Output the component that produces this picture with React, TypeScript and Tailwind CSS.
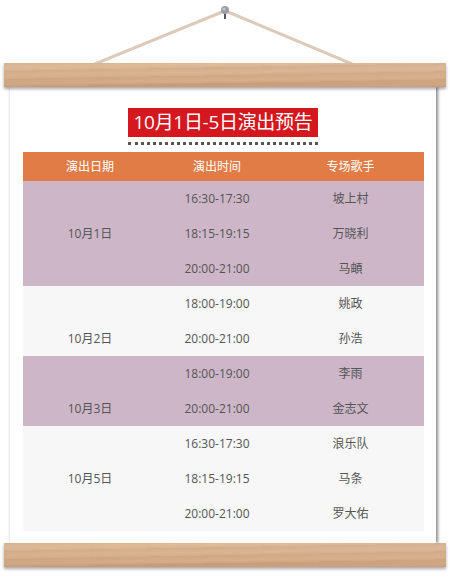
import React from 'react';

type Show = { time: string; singer: string };
type Group = { date: string; shows: Show[]; bg: string };

const GROUPS: Group[] = [
  {
    date: '10月1日',
    bg: 'bg-[#cdb6c8]',
    shows: [
      { time: '16:30-17:30', singer: '坡上村' },
      { time: '18:15-19:15', singer: '万晓利' },
      { time: '20:00-21:00', singer: '马頔' },
    ],
  },
  {
    date: '10月2日',
    bg: 'bg-[#f7f7f7]',
    shows: [
      { time: '18:00-19:00', singer: '姚政' },
      { time: '20:00-21:00', singer: '孙浩' },
    ],
  },
  {
    date: '10月3日',
    bg: 'bg-[#cdb6c8]',
    shows: [
      { time: '18:00-19:00', singer: '李雨' },
      { time: '20:00-21:00', singer: '金志文' },
    ],
  },
  {
    date: '10月5日',
    bg: 'bg-[#f7f7f7]',
    shows: [
      { time: '16:30-17:30', singer: '浪乐队' },
      { time: '18:15-19:15', singer: '马条' },
      { time: '20:00-21:00', singer: '罗大佑' },
    ],
  },
];

const WOOD =
  'bg-[image:repeating-linear-gradient(179deg,rgba(140,90,55,0.08)_0px,rgba(140,90,55,0)_3px,rgba(255,235,210,0.08)_5px,rgba(140,90,55,0)_8px),linear-gradient(180deg,#dcb998_0%,#d6b08d_40%,#d1a884_75%,#c89c77_100%)]';

function Hanger(): React.ReactElement {
  return (
    <svg width="450" height="63" viewBox="0 0 450 63" className="block">
      <line x1="222" y1="12" x2="95" y2="64" stroke="#dccabb" strokeWidth="3" />
      <line x1="228" y1="12" x2="352" y2="64" stroke="#dccabb" strokeWidth="3" />
      <rect x="224" y="12" width="2" height="7" fill="#555" />
      <circle cx="225" cy="10" r="4" fill="#9a9ea3" />
      <circle cx="224" cy="9" r="1.5" fill="#c5c8cc" />
    </svg>
  );
}

function Bar(): React.ReactElement {
  return (
    <div
      className={`mx-[4px] h-[24px] ${WOOD} shadow-[0_2px_3px_rgba(0,0,0,0.35)] relative z-10`}
    />
  );
}

export default function App(): React.ReactElement {
  return (
    <div className="w-[450px] h-[578px] bg-white overflow-hidden font-['Open_Sans','Noto_Sans_CJK_SC',sans-serif]">
      <Hanger />
      <Bar />
      <div className="ml-[10px] w-[426px] h-[456px] bg-white shadow-[2px_0_3px_rgba(0,0,0,0.45),-1px_0_2px_rgba(0,0,0,0.08)] pt-[21px]">
        <div className="flex justify-center">
          <div className="border-b-[3px] border-dotted border-[#555] pb-[5px]">
            <div className="bg-[#d5171f] text-white text-[19px] leading-[29px] h-[29px] px-[6px] whitespace-nowrap tracking-[-0.3px]">
              10月1日-5日演出预告
            </div>
          </div>
        </div>

        <div className="ml-[13px] mt-[7px] w-[401px] text-[12px]">
          <div className="grid grid-cols-[134px_120px_147px] h-[29px] bg-[#e27c47] text-white items-center text-center">
            <div>演出日期</div>
            <div>演出时间</div>
            <div>专场歌手</div>
          </div>
          {GROUPS.map((g) => (
            <div
              key={g.date}
              className={`grid grid-cols-[134px_120px_147px] auto-rows-[35px] items-center text-center text-[#555] ${g.bg}`}
            >
              {g.shows.map((s, i) => (
                <React.Fragment key={s.time}>
                  <div>{i === 1 ? g.date : ''}</div>
                  <div>{s.time}</div>
                  <div>{s.singer}</div>
                </React.Fragment>
              ))}
            </div>
          ))}
        </div>
      </div>
      <Bar />
    </div>
  );
}
